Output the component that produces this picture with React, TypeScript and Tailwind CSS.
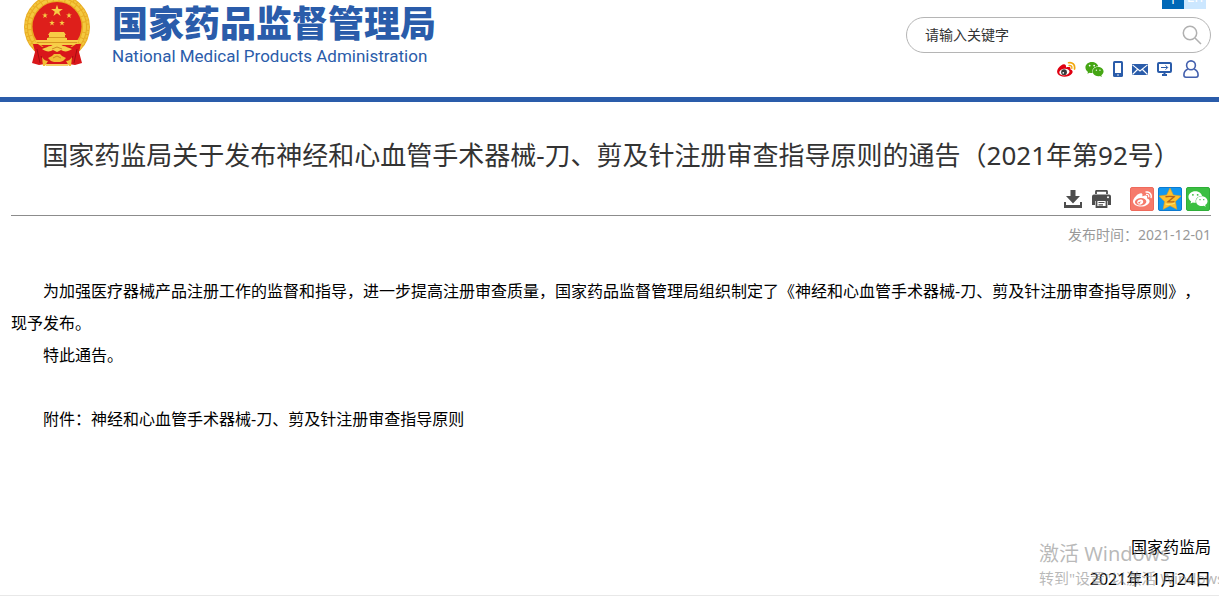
import type { ReactNode } from "react";
import { FaWeibo, FaWeixin } from "react-icons/fa";

const articleTitle = "神经和心血管手术器械-刀、剪及针注册审查指导原则";

function Emblem() {
  const star = "M0 -1 L.23 -.31 L.95 -.31 L.36 .12 L.59 .81 L0 .38 L-.59 .81 L-.36 .12 L-.95 -.31 L-.23 -.31Z";
  return (
    <svg width="66" height="72" viewBox="0 0 66 72" className="shrink-0" role="img" aria-label="国徽">
      <circle cx="33" cy="33" r="33" fill="#e9ac22" />
      <circle cx="33" cy="33" r="31" fill="none" stroke="#f2c53c" strokeWidth="2" strokeDasharray="3 1" />
      <circle cx="33" cy="33" r="27.500" fill="none" stroke="#f4c93f" strokeWidth="3" strokeDasharray="5 1" />
      <circle cx="33" cy="32.500" r="24.500" fill="#de1f1b" />
      <g fill="#f7cc45">
        <path d={star} transform="translate(33 17) scale(6.2)" />
        <path d={star} transform="translate(21 21.500) scale(3)" />
        <path d={star} transform="translate(45 21.500) scale(3)" />
        <path d={star} transform="translate(28 29) scale(3)" />
        <path d={star} transform="translate(38 29) scale(3)" />
        <path d="M26 38h14l2 3H24zM25 41h16v3H25zM23 44h20v3H23z" />
        <path d="M11 46h44l-3 5H14z" />
      </g>
      <path d="M24 43.500h18M13 48.500h40" stroke="#cf8a1a" strokeWidth=".8" />
      <path d="M9 50h5l4 3h30l4-3h5l-2 8 3 11-7 2-6-1H21l-6 1-7-2 3-11z" fill="#d9161a" />
      <path d="M13 55l3 14M53 55l-3 14M17 62l3 6M49 62l-3 6" stroke="#a50e12" strokeWidth="1" />
      <path d="M18 55c4-1 6-3 9-3l3-2 3 1 3-1 3 2c3 0 5 2 9 3-4 3-8 3-11 1l-4 2-4-2c-3 2-7 2-11-1z" fill="#f6cf4a" />
      <path d="M24 64l4-2 2-2h6l2 2 4 2-3 3-3 1h-6l-3-1z" fill="#f2bd35" />
      <path d="M18 63c2 3 4 4 6 4l-3 5h-2zM48 63c-2 3-4 4-6 4l3 5h2z" fill="#f2bd35" />
      <path d="M22 71h22" stroke="#f2bd35" strokeWidth="1.500" />
      <path d="M28 55l5-2 5 2M29 64l4-2 4 2" stroke="#c6781a" strokeWidth=".8" fill="none" />
    </svg>
  );
}

function WeiboColor() {
  return (
    <svg width="19" height="17" viewBox="0 0 20 17">
      <path d="M8.200 3.200C6.500 2.300 3.200 4.600 1.300 7.300-.8 10.300-.2 13.500 3.400 15.200c4 1.800 9.800.9 12.200-2.200 1.700-2.200.7-4.200-1.600-4.800.8-1.900-.6-3.100-4.600-1.900.4-1.600-.1-2.600-1.200-3.100z" fill="#df0011" />
      <ellipse cx="7.800" cy="11.200" rx="5.400" ry="3.400" transform="rotate(-8 7.800 11.200)" fill="#fff" />
      <circle cx="7.400" cy="11.300" r="3" fill="#3a3a3a" />
      <circle cx="6.600" cy="12" r=".9" fill="#fff" />
      <path d="M12.200 1.400c3.800-.9 7.200 2 6.200 6.600" fill="none" stroke="#f2a80d" strokeWidth="1.800" strokeLinecap="round" />
      <path d="M12.700 4.300c2-.3 3.400.9 2.900 3" fill="none" stroke="#f2a80d" strokeWidth="1.500" strokeLinecap="round" />
    </svg>
  );
}

function Phone() {
  return (
    <svg width="10" height="16" viewBox="0 0 10 16">
      <rect width="10" height="16" rx="1.500" fill="#2a5caa" />
      <path d="M2 2h6v10H2z" fill="#fff" />
      <circle cx="5" cy="14" r=".8" fill="#fff" />
    </svg>
  );
}

function Mail() {
  return (
    <svg width="16" height="11" viewBox="0 0 16 11">
      <rect width="16" height="11" fill="#2a5caa" />
      <path d="M.5 .8L8 7l7.500-6.200M.5 10.500L5.500 5.500M15.500 10.500l-5-5" fill="none" stroke="#fff" strokeWidth="1.100" />
    </svg>
  );
}

function Monitor() {
  return (
    <svg width="15" height="14" viewBox="0 0 15 14" fill="none" stroke="#2a5caa">
      <rect x="1" y="1" width="13" height="9" rx="1" strokeWidth="2" />
      <path d="M4 5.500h6.500M8.500 3.300l2.200 2.200-2.200 2.200" strokeWidth="1" />
      <path d="M7.500 10v3M5 13h5" strokeWidth="2" />
    </svg>
  );
}

function Person() {
  return (
    <svg width="16" height="18" viewBox="0 0 16 18" fill="none" stroke="#4360ae" strokeWidth="1.600">
      <circle cx="8" cy="5.300" r="4.400" />
      <path d="M4.800 9C2.500 10 .9 12.300.9 15c0 1.600.6 2.200 2 2.200h10.200c1.400 0 2-.6 2-2.200 0-2.700-1.600-5-3.900-6" />
    </svg>
  );
}

function Download() {
  return (
    <svg width="18" height="18" viewBox="0 0 18 18" fill="#4d4d4d">
      <path d="M6.500 0h5v6h4.500l-7 7.500L2 6h4.500z" />
      <path d="M0 12h2v3h14v-3h2v6H0z" />
    </svg>
  );
}

function Printer() {
  return (
    <svg width="19" height="18" viewBox="0 0 19 18">
      <path d="M4 4V1.500Q4 .8 4.800.8h9.400q.8 0 .8.700V4" fill="none" stroke="#4d4d4d" strokeWidth="1.800" />
      <path d="M2 4.500h15a2 2 0 0 1 2 2V15h-3v-4H3v4H0V6.500a2 2 0 0 1 2-2z" fill="#4d4d4d" />
      <path d="M4.500 10h10v7h-10z" fill="#fff" stroke="#4d4d4d" strokeWidth="1.800" />
      <path d="M6.500 12.500h6M6.500 14.800h4.500" stroke="#4d4d4d" strokeWidth="1.200" />
      <circle cx="16" cy="7.200" r="1" fill="#fff" />
    </svg>
  );
}

function QzoneStar() {
  return (
    <svg width="24" height="24" viewBox="0 0 24 24" className="shrink-0">
      <path d="M12 1l3.300 7 7.700 1-5.600 5.400 1.400 7.900L12 18.700l-6.800 3.600 1.400-7.900L1 9l7.700-1z" fill="#fdc02d" stroke="#e5a21c" strokeWidth=".6" />
      <path d="M7.500 9.800c3-.6 5.500-.6 8.500 0l-6 4.900c2.500.4 4 .3 6.500-.1" fill="none" stroke="#b5651a" strokeWidth="1.400" />
      <path d="M7.500 16.800c3.500 1 6.500.6 9.500-.8" fill="none" stroke="#ffe36b" strokeWidth="1.200" />
    </svg>
  );
}

function IconLink({ label, className = "", children }: { label: string; className?: string; children: ReactNode }) {
  return (
    <a href="#" aria-label={label} className={`flex items-center justify-center ${className}`}>
      {children}
    </a>
  );
}

function Header() {
  return (
    <header className="flex items-start justify-between overflow-hidden border-b-5 border-[#2a5caa] pl-6 pr-2 pb-[19px]">
      <a href="#" className="-mt-1.5 flex gap-[22px] text-[#2a5caa]">
        <Emblem />
        <div className="pt-2.5">
          <div className="text-[36px] leading-10 font-black">国家药品监督管理局</div>
          <div className="font-[Roboto,sans-serif] text-[17px] leading-6">National Medical Products Administration</div>
        </div>
      </a>

      <div className="flex w-[305px] flex-col">
        <div className="-mt-[15px] mr-[5px] flex justify-end text-sm leading-6 text-white">
          <button className="w-[22px] bg-[#0068b7]">中</button>
          <button className="w-[22px] bg-[#cce7ff]">En</button>
        </div>
        <form className="mt-2 flex h-9 items-center rounded-full border border-[#b5b5b5] pl-[18px] pr-2">
          <input
            type="text"
            aria-label="请输入关键字"
            placeholder="请输入关键字"
            className="min-w-0 flex-1 text-sm outline-none placeholder:text-[#333]"
          />
          <button type="button" aria-label="搜索">
            <svg width="20" height="20" viewBox="0 0 20 20" fill="none" stroke="#b0b0b0" strokeWidth="1.500">
              <circle cx="8" cy="8" r="6.700" />
              <path d="M13 13l6 6" />
            </svg>
          </button>
        </form>
        <nav className="mt-[7px] mr-3 flex h-[18px] items-center justify-end gap-[9px]">
          <IconLink label="微博"><WeiboColor /></IconLink>
          <IconLink label="微信"><FaWeixin size={19} color="#45a614" /></IconLink>
          <IconLink label="手机版"><Phone /></IconLink>
          <IconLink label="邮箱"><Mail /></IconLink>
          <IconLink label="客户端"><Monitor /></IconLink>
          <IconLink label="个人中心" className="pl-0.5"><Person /></IconLink>
        </nav>
      </div>
    </header>
  );
}

function Toolbar() {
  return (
    <div className="mt-3 flex items-center justify-end gap-1 border-b border-[#8c8c8c] pr-px pb-1">
      <button aria-label="下载" className="mr-1.5"><Download /></button>
      <button aria-label="打印" className="mr-[15px]"><Printer /></button>
      <IconLink label="分享到微博" className="size-6 rounded-xs border border-[#ee6a5c] bg-[#f67a6b]">
        <FaWeibo size={19} color="#fff" />
      </IconLink>
      <IconLink label="分享到QQ空间" className="size-6 rounded-xs border border-[#0b7ad0] bg-[#1296ee]">
        <QzoneStar />
      </IconLink>
      <IconLink label="分享到微信" className="size-6 rounded-xs border border-[#2fae38] bg-[#3bbf42]">
        <FaWeixin size={20} color="#fff" />
      </IconLink>
    </div>
  );
}

export default function App() {
  return (
    <div className="relative overflow-hidden border-b border-[#e8e8e8] bg-white font-['Noto_Sans','Noto_Sans_CJK_SC',sans-serif] [text-spacing-trim:space-all]">
      <Header />

      <main className="pt-[33px] pl-[11px] pr-2">
        <h1 className="text-center text-[26px] leading-10 text-[#333]">
          国家药监局关于发布{articleTitle}的通告（2021年第92号）
        </h1>
        <Toolbar />
        <p className="mt-[9px] text-right text-sm leading-5 text-[#999]">发布时间：2021-12-01</p>

        <article className="mt-[30px] text-base leading-8 text-black">
          <p className="indent-8">
            为加强医疗器械产品注册工作的监督和指导，进一步提高注册审查质量，国家药品监督管理局组织制定了《{articleTitle}》，现予发布。
          </p>
          <p className="indent-8">特此通告。</p>
          <p className="mt-8 indent-8">
            附件：<a href="#">{articleTitle}</a>
          </p>
          <div className="mt-24 text-right">
            <p>国家药监局</p>
            <p>2021年11月24日</p>
          </div>
        </article>
      </main>

      {/* Activation notice floating over the page corner */}
      <div className="pointer-events-none absolute right-0 bottom-[7px] w-[180px] overflow-hidden whitespace-nowrap text-[#8a8a8a]/60">
        <p className="text-xl leading-7">激活 Windows</p>
        <p className="text-[15px] leading-5">转到"设置"以激活 Windows。</p>
      </div>
    </div>
  );
}
